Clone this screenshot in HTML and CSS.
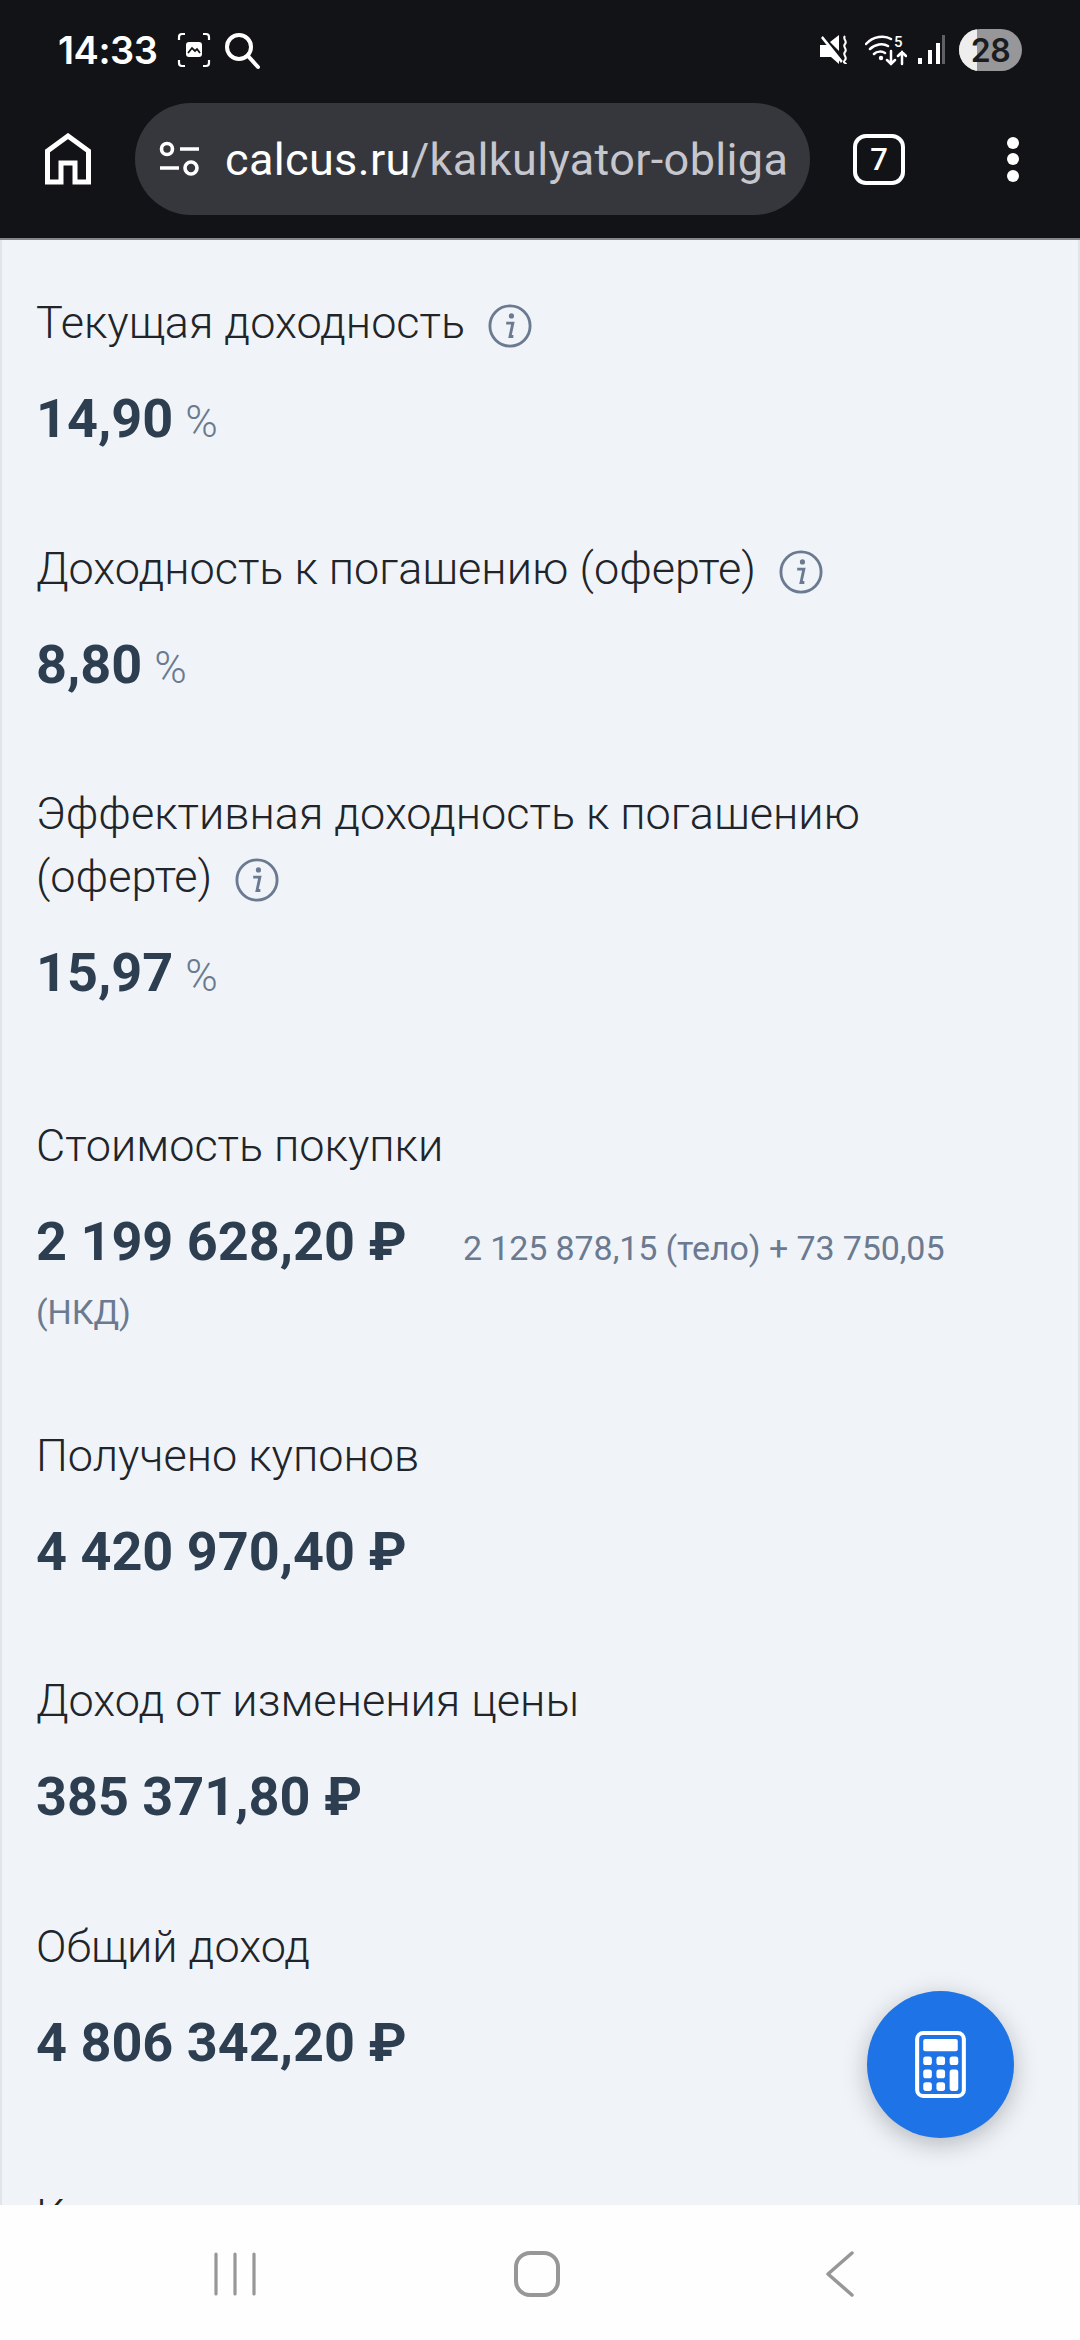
FILE: index.html
```html
<!DOCTYPE html>
<html lang="ru">
<head>
    <meta charset="UTF-8">
    <meta name="viewport" content="width=device-width, initial-scale=1.0">
    <title>calcus.ru</title>
    <link rel="stylesheet" href="styles.css">
</head>
<body>
    <header class="top">
        <!-- Status bar -->
        <div class="status">
            <span class="clock">14:33</span>
            <svg class="st-shot" width="34" height="36" viewBox="0 0 34 36" fill="none" stroke="#fff" stroke-width="2.2">
                <path d="M8 2H5a3 3 0 0 0-3 3v3M26 2h3a3 3 0 0 1 3 3v3M8 34H5a3 3 0 0 1-3-3v-3M26 34h3a3 3 0 0 0 3-3v-3"/>
                <rect x="9" y="10" width="16" height="15" rx="3" fill="#fff" stroke="none"/>
                <path d="M11 21l4-5 3 3 2-2 3 4" fill="none" stroke="#121317" stroke-width="1.8"/>
            </svg>
            <svg class="st-search" width="36" height="38" viewBox="0 0 36 38" fill="none" stroke="#fff" stroke-width="4" stroke-linecap="round">
                <circle cx="15" cy="15" r="12"/>
                <path d="M24 24l10 11"/>
            </svg>
            <div class="st-right">
                <svg class="st-mute" width="29" height="30" viewBox="0 0 29 30" fill="#fff">
                    <path d="M0 10h6l2 0 11 14v5l-8-7H0zM10 7l9-7v16zM1 3l1.800-2 20 25-1.800 2z"/>
                    <path d="M25 1c-3 3 3 5 0 8s3 5 0 8 3 5 0 8 1 3 1 4" fill="none" stroke="#fff" stroke-width="2"/>
                </svg>
                <svg class="st-wifi" width="42" height="32" viewBox="0 0 42 32" fill="none" stroke="#fff" stroke-width="2.500" stroke-linecap="round">
                    <path d="M1 10C8 2 20 1 26 5M5 15c5-5 13-6 18-3M9 20c3-3 8-3 11-1"/>
                    <circle cx="16" cy="24" r="2.200" fill="#fff" stroke="none"/>
                    <path d="M26 17v13m-4-4l4 4 4-4M37 30V18m-4 4l4-4 4 4"/>
                    <text x="29" y="13" class="st-five">5</text>
                </svg>
                <svg class="st-signal" width="28" height="30" viewBox="0 0 28 30" fill="#fff">
                    <rect x="1" y="23" width="4" height="6"/>
                    <rect x="11" y="15" width="4" height="14"/>
                    <rect x="19" y="8" width="4" height="21"/>
                    <rect x="25" y="0" width="3" height="29" fill="#5f6064"/>
                </svg>
                <div class="battery"><span class="battery-fill"></span><span class="battery-num">28</span></div>
            </div>
        </div>

        <!-- Browser toolbar -->
        <div class="toolbar">
            <svg class="tb-home" width="46" height="52" viewBox="0 0 46 52" fill="none" stroke="#fff" stroke-width="5">
                <path d="M2.500 49V18L23 3l20.500 15v31H30V30H16v19z"/>
            </svg>
            <div class="url-pill">
                <svg width="42" height="36" viewBox="0 0 42 36" fill="none" stroke="#fff" stroke-width="3.600">
                    <circle cx="8" cy="8" r="5.500"/>
                    <path d="M21 8h19M1 27h19"/>
                    <circle cx="32" cy="27" r="6"/>
                </svg>
                <div class="url"><span class="url-host">calcus.ru</span>/kalkulyator-obliga</div>
            </div>
            <div class="tabs">7</div>
            <div class="dots"><i></i><i></i><i></i></div>
        </div>
    </header>

    <main class="page">
        <section class="item">
            <div class="label">Текущая доходность <svg class="info"><use href="#info"/></svg></div>
            <div class="value">14,90 <small>%</small></div>
        </section>
        <section class="item">
            <div class="label">Доходность к погашению (оферте) <svg class="info"><use href="#info"/></svg></div>
            <div class="value">8,80 <small>%</small></div>
        </section>
        <section class="item">
            <div class="label">Эффективная доходность к погашению <span class="nowrap">(оферте) <svg class="info"><use href="#info"/></svg></span></div>
            <div class="value">15,97 <small>%</small></div>
        </section>
        <section class="item item-gap">
            <div class="label">Стоимость покупки</div>
            <div class="value">2 199 628,20 ₽ <span class="note note-first">2 125 878,15 (тело) + 73 750,05</span> <span class="note">(НКД)</span></div>
        </section>
        <section class="item">
            <div class="label">Получено купонов</div>
            <div class="value">4 420 970,40 ₽</div>
        </section>
        <section class="item">
            <div class="label">Доход от изменения цены</div>
            <div class="value">385 371,80 ₽</div>
        </section>
        <section class="item">
            <div class="label">Общий доход</div>
            <div class="value">4 806 342,20 ₽</div>
        </section>
        <section class="item item-gap">
            <div class="label">Купонная доходность</div>
        </section>

        <button class="fab">
            <svg width="51" height="67" viewBox="0 0 50 66" fill="#fff">
                <path fill-rule="evenodd" d="M8 0h34a8 8 0 0 1 8 8v50a8 8 0 0 1-8 8H8a8 8 0 0 1-8-8V8a8 8 0 0 1 8-8zm0 4a4 4 0 0 0-4 4v50a4 4 0 0 0 4 4h34a4 4 0 0 0 4-4V8a4 4 0 0 0-4-4z"/>
                <rect x="8" y="8" width="34" height="12" rx="2"/>
                <rect x="8" y="25" width="8.500" height="8.500" rx="2.500"/>
                <rect x="21" y="25" width="8.500" height="8.500" rx="2.500"/>
                <rect x="34" y="25" width="8.500" height="8.500" rx="2.500"/>
                <rect x="8" y="38" width="8.500" height="8.500" rx="2.500"/>
                <rect x="21" y="38" width="8.500" height="8.500" rx="2.500"/>
                <rect x="34" y="38" width="8.500" height="21" rx="2.500"/>
                <rect x="8" y="50.500" width="8.500" height="8.500" rx="2.500"/>
                <rect x="21" y="50.500" width="8.500" height="8.500" rx="2.500"/>
            </svg>
        </button>
    </main>

    <!-- Android navigation -->
    <nav class="navbar">
        <svg width="44" height="44" viewBox="0 0 44 44" fill="none" stroke="#979797" stroke-width="3.200" stroke-linecap="round">
            <path d="M3 2v40M22 2v40M41 2v40"/>
        </svg>
        <svg class="nav-home" width="46" height="46" viewBox="0 0 46 46" fill="none" stroke="#979797" stroke-width="4">
            <rect x="2" y="2" width="42" height="42" rx="14"/>
        </svg>
        <svg class="nav-back" width="30" height="46" viewBox="0 0 30 46" fill="none" stroke="#979797" stroke-width="3.500" stroke-linecap="round" stroke-linejoin="round">
            <path d="M27 2L3 23l24 21"/>
        </svg>
    </nav>

    <svg class="defs" width="0" height="0">
        <symbol id="info" viewBox="0 0 46 46">
            <circle cx="23" cy="23" r="21" fill="none" stroke="#6b7a90" stroke-width="3"/>
            <circle cx="24.500" cy="12.500" r="2.700" fill="#6b7a90"/>
            <path d="M19 20h7l-3 14h3.500" fill="none" stroke="#6b7a90" stroke-width="3"/>
        </symbol>
    </svg>
</body>
</html>
```
FILE: styles.css
```css
html, body {
    margin: 0;
    padding: 0;
    height: 2340px;
    overflow: hidden;
}

body {
    display: flex;
    flex-direction: column;
    width: 1080px;
    font-family: Roboto, "Liberation Sans", sans-serif;
    background-color: #fff;
}

.top {
    height: 240px;
    box-sizing: border-box;
    flex-shrink: 0;
    background-color: #121317;
    color: #fff;
    border-bottom: 2px solid #85868c;
}

.status {
    display: flex;
    align-items: center;
    height: 100px;
    padding: 0 58px 0 58px;
    box-sizing: border-box;
}

.clock {
    font-family: Inter, Roboto, sans-serif;
    font-size: 38px;
    font-weight: 600;
    letter-spacing: -0.5px;
    margin-right: 20px;
}

.st-shot {
    margin-right: 13px;
}

.st-search {
    margin-top: 2px;
}

.st-right {
    display: flex;
    align-items: center;
    margin-left: auto;
}

.st-wifi {
    margin-left: 16px;
}

.st-signal {
    margin-left: 10px;
}

.st-five {
    font-family: Roboto, sans-serif;
    font-size: 15px;
    font-weight: 500;
    fill: #fff;
    stroke: none;
}

.battery {
    position: relative;
    width: 63px;
    height: 42px;
    margin-left: 14px;
    border-radius: 21px;
    overflow: hidden;
    background-color: #97979a;
    display: flex;
    align-items: center;
    justify-content: center;
}

.battery-fill {
    position: absolute;
    left: 0;
    top: 0;
    bottom: 0;
    width: 18px;
    background-color: #eeeeee;
}

.battery-num {
    position: relative;
    font-family: Inter, Roboto, sans-serif;
    font-size: 32px;
    font-weight: 600;
    color: #1b1c20;
    letter-spacing: -0.5px;
}

.toolbar {
    display: flex;
    align-items: center;
    height: 112px;
    margin-top: 3px;
    padding-left: 45px;
}

.tb-home {
    flex-shrink: 0;
    margin-right: 44px;
}

.url-pill {
    display: flex;
    align-items: center;
    width: 675px;
    height: 112px;
    box-sizing: border-box;
    padding-left: 24px;
    border-radius: 56px;
    background-color: #36373c;
    flex-shrink: 0;
}

.url-pill svg {
    flex-shrink: 0;
    margin-right: 24px;
}

.url {
    font-size: 45px;
    color: #c6c7ce;
    white-space: nowrap;
    letter-spacing: 0.35px;
}

.url-host {
    color: #fff;
}

.tabs {
    width: 52px;
    height: 51px;
    margin-left: 43px;
    border: 4px solid #fff;
    border-radius: 13px;
    box-sizing: border-box;
    display: flex;
    align-items: center;
    justify-content: center;
    font-size: 31px;
    font-weight: 500;
}

.dots {
    display: flex;
    flex-direction: column;
    gap: 4.5px;
    margin-left: 102px;
}

.dots i {
    width: 12px;
    height: 12px;
    border-radius: 50%;
    background-color: #fff;
}

.page {
    position: relative;
    flex: 1;
    overflow: hidden;
    background-color: #f0f4f9;
    border-left: 2px solid #e1e5eb;
    border-right: 2px solid #e1e5eb;
    padding: 51px 34px 0;
}

.item {
    margin-bottom: 85.5px;
}

.item-gap {
    margin-top: 109px;
}

.label {
    font-size: 45px;
    font-weight: 300;
    line-height: 63px;
    color: #212529;
}

.nowrap {
    white-space: nowrap;
}

.info {
    width: 44px;
    height: 44px;
    margin-left: 12px;
    vertical-align: -10px;
}

.value {
    margin-top: 33px;
    font-size: 54px;
    font-weight: 700;
    line-height: 64px;
    color: #2c3e50;
}

.value small {
    margin-left: -1.5px;
    font-size: 44px;
    font-weight: 300;
    line-height: 1;
    color: #6b7a90;
}

.note {
    font-size: 34px;
    font-weight: 400;
    line-height: 1;
    color: #6b7a90;
    letter-spacing: -0.1px;
}

.note-first {
    margin-left: 43px;
}

.fab {
    position: absolute;
    right: 64px;
    top: 1751px;
    width: 147px;
    height: 147px;
    border: none;
    padding: 0;
    border-radius: 50%;
    background-color: #1e73e6;
    box-shadow: 0 6px 24px rgba(0, 0, 0, 0.25);
    display: flex;
    align-items: center;
    justify-content: center;
}

.navbar {
    height: 135px;
    flex-shrink: 0;
    background-color: #fefefe;
    display: flex;
    align-items: center;
    padding: 3px 0 0 213px;
    box-sizing: border-box;
}

.nav-home {
    margin-left: 257px;
}

.nav-back {
    margin-left: 265px;
}

.defs {
    position: absolute;
}
```
